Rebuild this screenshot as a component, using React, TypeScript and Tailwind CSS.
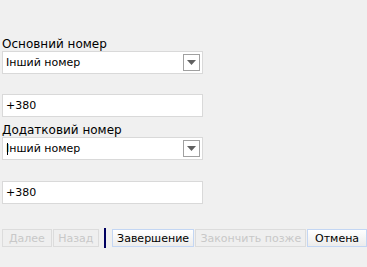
import React from "react";

const font = { fontFamily: '"DejaVu Sans", "Liberation Sans", sans-serif' };

function Select({ caret }: { caret?: boolean }) {
  return (
    <div className="relative h-[23px] w-[201px] border border-[#d9d9d9] bg-white flex items-center pl-[3px]">
      {caret && <span className="absolute left-[4px] top-[5px] h-[12px] w-px bg-black" />}
      <span className="text-[11px] leading-none text-black">Інший номер</span>
      <div className="absolute right-[2px] top-[2px] h-[17px] w-[17px] border border-[#a0a0a0] bg-white flex items-center justify-center">
        <svg width="9" height="5" viewBox="0 0 9 5">
          <path d="M0 0H9L4.5 5Z" fill="#606060" />
        </svg>
      </div>
    </div>
  );
}

function Input() {
  return (
    <div className="h-[23px] w-[201px] border border-[#d9d9d9] bg-white flex items-center pl-[3px]">
      <span className="text-[11px] leading-none text-black">+380</span>
    </div>
  );
}

function Btn({ label, w, enabled }: { label: string; w: string; enabled?: boolean }) {
  return (
    <div
      className={
        "h-[18px] flex items-center justify-center whitespace-nowrap text-[11px] leading-none border " +
        w +
        (enabled
          ? " border-[#c3d6f3] bg-gradient-to-b from-white to-[#ececec] text-black"
          : " border-[#dcdcdc] bg-[#efefef] text-[#c8c8c8]")
      }
    >
      {label}
    </div>
  );
}

export default function App() {
  return (
    <div className="w-[367px] h-[267px] bg-[#f0f0f0] overflow-hidden" style={font}>
      <div className="pl-[2px] pt-[37px] flex flex-col">
        <div className="text-[12px] leading-[14px] h-[14px] text-black">Основний номер</div>
        <Select />
        <div className="h-[20px]" />
        <Input />
        <div className="text-[12px] leading-[14px] h-[14px] mt-[6px] text-black">Додатковий номер</div>
        <Select caret />
        <div className="h-[21px]" />
        <Input />
      </div>
      <div className="pl-[2px] mt-[24px] flex items-center">
        <Btn label="Далее" w="w-[50px]" />
        <div className="w-[1px]" />
        <Btn label="Назад" w="w-[46px]" />
        <div className="w-[5px]" />
        <div className="h-[20px] w-[2px] bg-[#000060]" />
        <div className="w-[6px]" />
        <Btn label="Завершение" w="w-[83px]" enabled />
        <div className="w-[1px]" />
        <Btn label="Закончить позже" w="w-[111px]" />
        <div className="w-[1px]" />
        <Btn label="Отмена" w="w-[60px]" enabled />
      </div>
    </div>
  );
}
